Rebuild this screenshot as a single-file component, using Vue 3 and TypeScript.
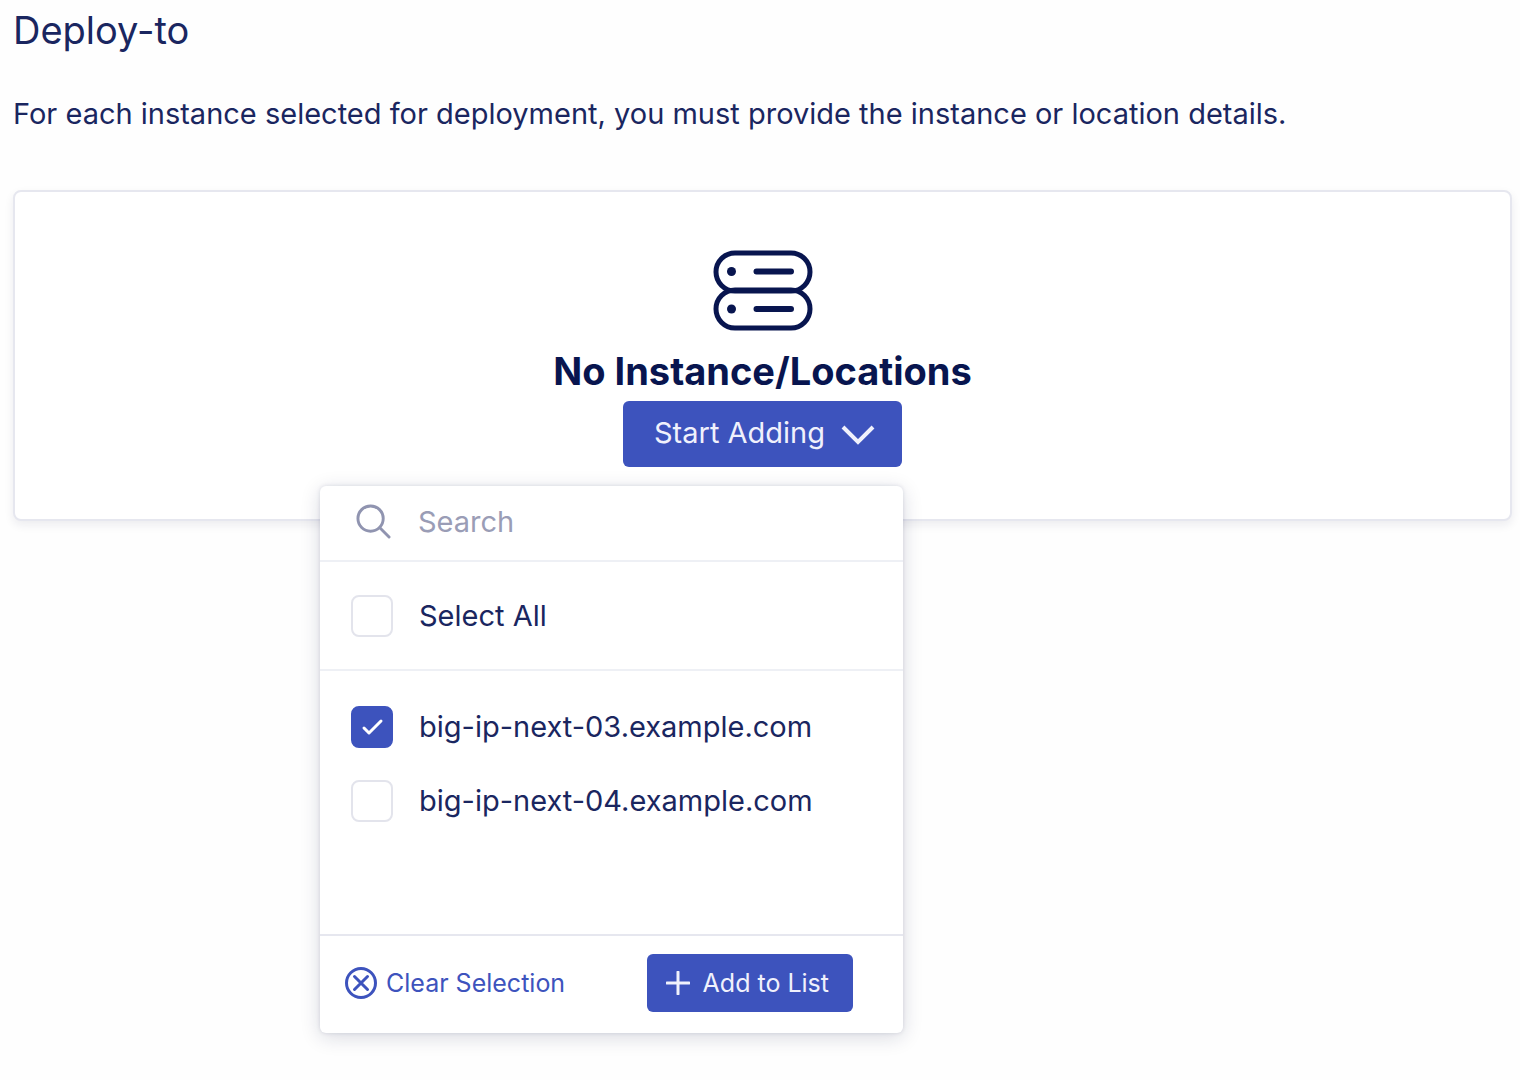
<script setup lang="ts">
import { computed, ref } from 'vue'

interface Instance {
  id: string
  name: string
}

const instances: Instance[] = [
  { id: 'instance-03', name: 'big-ip-next-03.example.com' },
  { id: 'instance-04', name: 'big-ip-next-04.example.com' },
]

const open = ref(true)
const query = ref('')
const selected = ref<string[]>(['instance-03'])

const visible = computed(() =>
  instances.filter((item) => item.name.includes(query.value.trim().toLowerCase())),
)

const allSelected = computed({
  get: () => selected.value.length === instances.length,
  set: (on: boolean) => {
    selected.value = on ? instances.map((item) => item.id) : []
  },
})

function clearSelection(): void {
  selected.value = []
}
</script>

<template>
  <main class="page">
    <h1 class="page-title">Deploy-to</h1>
    <p class="intro">
      For each instance selected for deployment, you must provide the instance or location details.
    </p>

    <section class="card">
      <svg class="server-icon" viewBox="0 0 100 82" aria-hidden="true">
        <rect x="3" y="3" width="94" height="38" rx="19" />
        <rect x="3" y="40" width="94" height="38" rx="19" />
        <path d="M43.500 21.500H78M43.500 59H78" />
        <circle cx="18.500" cy="21.500" r="4.500" />
        <circle cx="18.500" cy="59" r="4.500" />
      </svg>
      <h2 class="card-title">No Instance/Locations</h2>

      <div class="picker">
        <button class="start" type="button" :aria-expanded="open" @click="open = !open">
          Start Adding
          <svg class="chevron" viewBox="0 0 34 22" aria-hidden="true">
            <path d="M2 3L17 18L32 3" />
          </svg>
        </button>

        <div v-if="open" class="menu">
          <label class="search">
            <svg class="search-icon" viewBox="0 0 36 36" aria-hidden="true">
              <circle cx="15" cy="15" r="13" />
              <path d="M24.500 24.500L34 34" />
            </svg>
            <input v-model="query" type="text" placeholder="Search" aria-label="Search" />
          </label>

          <div class="all">
            <label class="option">
              <span class="check">
                <input v-model="allSelected" type="checkbox" />
                <svg viewBox="0 0 42 42" aria-hidden="true"><path d="M13 22L18 27L30 15" /></svg>
              </span>
              Select All
            </label>
          </div>

          <div class="list">
            <label v-for="item in visible" :key="item.id" class="option">
              <span class="check">
                <input v-model="selected" type="checkbox" :value="item.id" />
                <svg viewBox="0 0 42 42" aria-hidden="true"><path d="M13 22L18 27L30 15" /></svg>
              </span>
              {{ item.name }}
            </label>
          </div>

          <div class="actions">
            <button class="clear" type="button" @click="clearSelection">
              <svg viewBox="0 0 32 32" aria-hidden="true">
                <circle cx="16" cy="16" r="14.500" />
                <path d="M9.500 9.500L22.500 22.500M22.500 9.500L9.500 22.500" />
              </svg>
              Clear Selection
            </button>
            <button class="add" type="button">
              <svg viewBox="0 0 24 24" aria-hidden="true"><path d="M12 1V23M1 12H23" /></svg>
              Add to List
            </button>
          </div>
        </div>
      </div>
    </section>
  </main>
</template>

<style>
body {
  margin: 0;
  background: #fefefe;
}
</style>

<style scoped>
.page {
  --navy: #1a2660;
  --ink: #08154f;
  --blue: #3d53bd;
  --line: #e6e7ef;
  min-height: 100vh;
  padding: 6px 8px 0 13px;
  color: var(--navy);
  font-family: Inter, "Liberation Sans", sans-serif;
  font-size: 29px;
}

.page *,
.page {
  box-sizing: border-box;
}

button,
input {
  margin: 0;
  font: inherit;
}

svg {
  display: block;
  flex: none;
  fill: none;
  stroke: currentColor;
  stroke-linecap: round;
  stroke-linejoin: round;
}

.page-title {
  margin: 0;
  font-size: 38px;
  font-weight: 400;
  line-height: 48px;
}

.intro {
  margin: 40px 0 56px;
  line-height: 40px;
}

.card {
  display: flex;
  flex-direction: column;
  align-items: center;
  padding: 58px 0 52px;
  border: 2px solid var(--line);
  border-radius: 8px;
  background: #fff;
  box-shadow: 0 4px 10px rgba(20, 25, 70, 0.08);
}

.server-icon {
  width: 100px;
  height: 82px;
  color: var(--ink);
  stroke-width: 5;
}

.server-icon path {
  stroke-width: 6;
}

.server-icon circle {
  fill: currentColor;
  stroke: none;
}

.card-title {
  margin: 15px 0 6px;
  color: var(--ink);
  font-size: 38px;
  font-weight: 700;
  line-height: 48px;
}

.picker {
  position: relative;
}

.start,
.add {
  display: flex;
  align-items: center;
  border: 0;
  border-radius: 6px;
  background: var(--blue);
  color: #f0f1fc;
}

.start {
  gap: 16px;
  height: 66px;
  padding: 0 27px 4px 31px;
}

.chevron {
  width: 34px;
  height: 22px;
  margin-top: 6px;
  stroke-linecap: butt;
  stroke-linejoin: miter;
  stroke-width: 4;
}

.menu {
  position: absolute;
  top: calc(100% + 19px);
  right: -1px;
  width: 583px;
  border-radius: 6px;
  background: #fff;
  box-shadow: 0 4px 20px rgba(20, 25, 70, 0.16), 0 0 4px rgba(20, 25, 70, 0.12);
}

.search {
  display: flex;
  align-items: center;
  gap: 27px;
  height: 76px;
  padding: 0 36px 3px;
  border-bottom: 2px solid #eef0f5;
  color: #9094b0;
}

.search-icon {
  width: 35px;
  height: 35px;
  stroke-width: 3;
}

.search input {
  flex: 1;
  min-width: 0;
  padding: 0;
  border: 0;
  outline: 0;
  background: none;
  color: var(--navy);
}

.search input::placeholder {
  color: #9a9db6;
  opacity: 1;
}

.all {
  padding: 33px 31px 32px;
  border-bottom: 2px solid #eef0f5;
}

.list {
  display: flex;
  flex-direction: column;
  gap: 32px;
  min-height: 263px;
  padding: 35px 31px;
}

.option {
  display: flex;
  align-items: center;
  gap: 26px;
  line-height: 42px;
}

.check {
  display: grid;
  flex: none;
}

.check input,
.check svg {
  grid-area: 1 / 1;
  width: 42px;
  height: 42px;
}

.check input {
  appearance: none;
  border: 2px solid #e3e4ec;
  border-radius: 8px;
  background: #fff;
}

.check input:checked {
  border-color: var(--blue);
  background: var(--blue);
}

.check svg {
  color: #fff;
  stroke-width: 3;
  pointer-events: none;
}

.check input:not(:checked) + svg {
  visibility: hidden;
}

.actions {
  display: flex;
  align-items: center;
  justify-content: space-between;
  height: 99px;
  padding: 0 50px 3px 25px;
  border-top: 2px solid var(--line);
  font-size: 25px;
}

.clear {
  display: flex;
  align-items: center;
  gap: 9px;
  padding: 0;
  border: 0;
  background: none;
  color: var(--blue);
}

.clear svg {
  width: 32px;
  height: 32px;
  stroke-width: 3;
}

.add {
  gap: 13px;
  height: 58px;
  padding: 0 24px 0 19px;
}

.add svg {
  width: 24px;
  height: 24px;
  stroke-width: 3;
}
</style>
